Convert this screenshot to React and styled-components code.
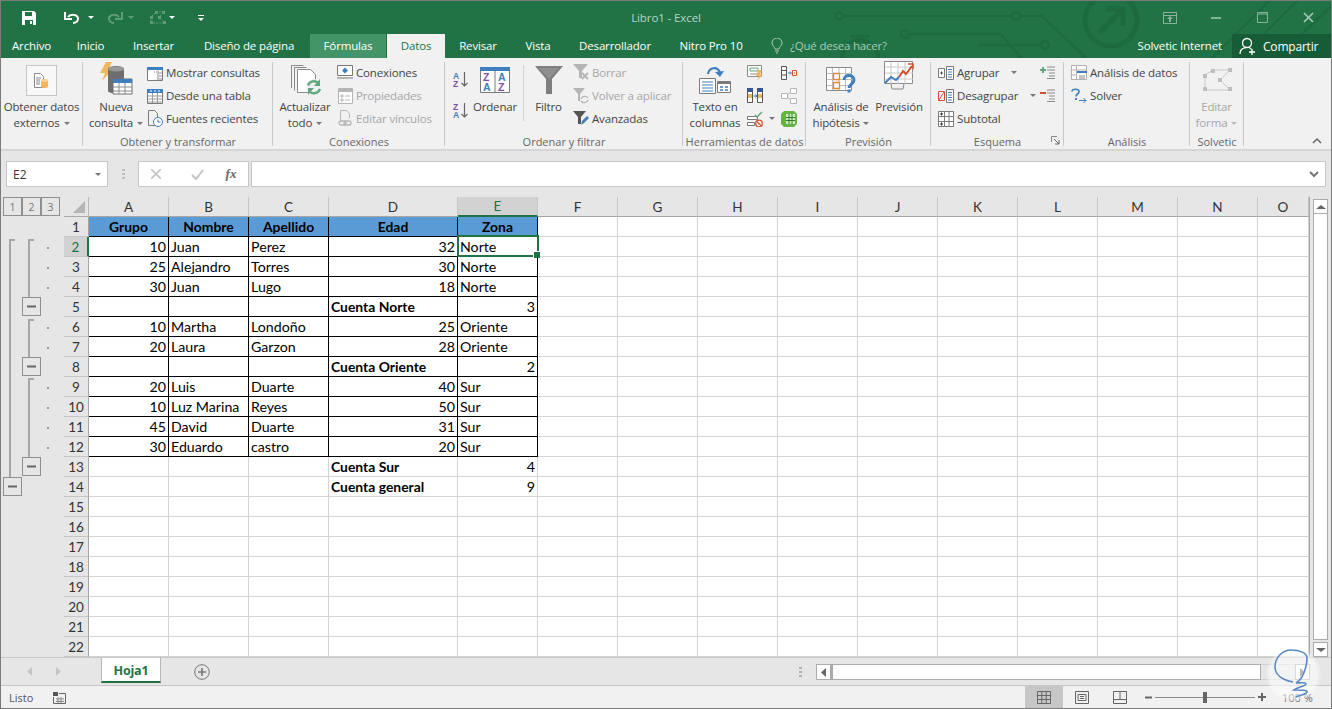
import React from "react";
import styled, { createGlobalStyle } from "styled-components";

const GlobalStyle = createGlobalStyle`
  html, body { margin: 0; padding: 0; background: #e6e6e6; }
  * { box-sizing: border-box; }
`;

const uiFont = `"Open Sans", "Noto Sans", sans-serif`;
const cellFont = `Lato, "Liberation Sans", sans-serif`;

const Window = styled.div`
  position: relative;
  width: 1332px;
  height: 709px;
  border: 1px solid #7b7b7b;
  display: flex;
  flex-direction: column;
  overflow: hidden;
  font-family: ${uiFont};
  background: #e6e6e6;
`;

/* ---------- title bar and tabs ---------- */
const Header = styled.div`
  position: relative;
  background: #217346;
  flex: none;
`;
const Circuit = styled.svg`
  position: absolute;
  left: -1px;
  top: -1px;
`;
const TitleBar = styled.div`
  position: relative;
  height: 33px;
  display: grid;
  grid-template-columns: 1fr auto 1fr;
  align-items: center;
`;
const Qat = styled.div`
  display: flex;
  align-items: center;
  padding-left: 20px;
  height: 100%;
`;
const QatSlot = styled.span`
  display: flex;
  align-items: center;
  margin-left: ${(p) => p.$ml || 0}px;
`;
const WindowTitle = styled.div`
  color: #b7d3c3;
  font-size: 11.5px;
  letter-spacing: -0.1px;
`;
const Controls = styled.div`
  display: flex;
  justify-content: flex-end;
`;
const ControlBtn = styled.div`
  width: 46px;
  height: 33px;
  display: flex;
  align-items: center;
  justify-content: center;
`;
const TabRow = styled.div`
  position: relative;
  height: 24px;
  display: flex;
  align-items: stretch;
`;
const Tab = styled.div`
  width: ${(p) => p.$w}px;
  margin-left: ${(p) => p.$ml || 0}px;
  padding-bottom: 1px;
  display: flex;
  align-items: center;
  justify-content: center;
  font-size: 11.5px;
  letter-spacing: -0.15px;
  color: ${(p) => (p.$active ? "#217346" : "#fff")};
  background: ${(p) => (p.$active ? "#f1f1f1" : p.$hot ? "#439467" : "transparent")};
`;
const HelpBox = styled.div`
  margin-left: 14px;
  padding-bottom: 1px;
  display: flex;
  align-items: center;
  gap: 7px;
  color: #a9cbb7;
  font-size: 11.5px;
  letter-spacing: -0.2px;
`;
const TabRight = styled.div`
  margin-left: auto;
  display: flex;
  align-items: stretch;
`;
const UserName = styled.div`
  display: flex;
  align-items: center;
  padding-bottom: 1px;
  color: #fff;
  font-size: 11.5px;
  letter-spacing: -0.15px;
  margin-right: 10px;
`;
const ShareBtn = styled.div`
  width: 99px;
  background: #185c37;
  display: flex;
  align-items: center;
  gap: 6px;
  padding-left: 7px;
  color: #fff;
  font-size: 12px;
  letter-spacing: -0.2px;
`;

/* ---------- ribbon ---------- */
const Ribbon = styled.div`
  position: relative;
  flex: none;
  height: 93px;
  display: flex;
  background: #f1f1f1;
  border-bottom: 2px solid #d6d6d6;
  color: #444;
  font-size: 11.5px;
  letter-spacing: -0.15px;
`;
const GroupWrap = styled.div`
  position: relative;
  width: ${(p) => p.$w}px;
  height: 91px;
  display: flex;
  flex-direction: column;
  flex: none;
  &::after {
    content: "";
    position: absolute;
    right: 0;
    top: 4px;
    bottom: 3px;
    width: 1px;
    background: #c9c9c9;
  }
`;
const GroupBody = styled.div`
  flex: 1;
  display: flex;
  padding-top: 3px;
  padding-left: ${(p) => p.$pad || 0}px;
`;
const GroupLabel = styled.div`
  height: 16px;
  margin-bottom: -1px;
  text-align: center;
  line-height: 16px;
  color: #666;
  font-size: 11px;
  letter-spacing: 0;
  white-space: nowrap;
`;
const Launcher = styled.svg`
  position: absolute;
  right: 4px;
  bottom: 4px;
`;
const BigBtn = styled.div`
  width: ${(p) => p.$w}px;
  margin-left: ${(p) => p.$ml || 0}px;
  display: flex;
  flex-direction: column;
  align-items: center;
  flex: none;
  color: ${(p) => (p.$off ? "#a6a6a6" : "inherit")};
`;
const BigIcon = styled.div`
  height: 38px;
  display: flex;
  align-items: ${(p) => (p.$top ? "flex-start" : "center")};
  justify-content: center;
`;
const BigText = styled.div`
  line-height: 16px;
  text-align: center;
  white-space: nowrap;
`;
const IconBox = styled.div`
  width: 31px;
  height: 31px;
  margin-top: 1px;
  border: 1px solid #c6c6c6;
  background: #f8f8f8;
  display: flex;
  align-items: center;
  justify-content: center;
`;
const Caret = styled.span`
  display: inline-block;
  width: 0;
  height: 0;
  margin-left: ${(p) => p.$ml ?? 4}px;
  vertical-align: 2px;
  border-left: 3px solid transparent;
  border-right: 3px solid transparent;
  border-top: 3px solid ${(p) => p.$color || "#777"};
`;
const SmallCol = styled.div`
  width: ${(p) => (p.$w ? `${p.$w}px` : "auto")};
  margin-left: ${(p) => p.$ml || 0}px;
  padding-top: ${(p) => p.$top || 0}px;
  display: flex;
  flex-direction: column;
  flex: none;
`;
const SmallRow = styled.div`
  height: ${(p) => p.$h || 23}px;
  display: flex;
  align-items: center;
  gap: ${(p) => p.$gap ?? 3}px;
  white-space: nowrap;
  color: ${(p) => (p.$off ? "#a6a6a6" : "inherit")};
`;
const IconSlot = styled.span`
  width: ${(p) => p.$w || 16}px;
  display: flex;
  justify-content: center;
  flex: none;
`;
const VDivider = styled.div`
  width: 1px;
  height: 56px;
  margin: 4px 0 0 ${(p) => p.$ml || 0}px;
  background: #d2d2d2;
  flex: none;
`;
const Collapse = styled.svg`
  position: absolute;
  right: 9px;
  bottom: 5px;
`;

/* ---------- formula bar ---------- */
const FormulaBar = styled.div`
  flex: none;
  height: 46px;
  padding: 10px 5px 10px 5px;
  display: flex;
  align-items: stretch;
`;
const FieldBox = styled.div`
  height: 26px;
  background: #fff;
  border: 1px solid #c6c6c6;
  display: flex;
  align-items: center;
  flex: ${(p) => (p.$grow ? 1 : "none")};
  width: ${(p) => (p.$w ? `${p.$w}px` : "auto")};
  margin-left: ${(p) => p.$ml || 0}px;
  padding: 0 6px;
  justify-content: ${(p) => p.$justify || "flex-start"};
`;
const NameText = styled.span`
  font-family: ${uiFont};
  font-size: 12px;
  color: #333;
  flex: 1;
`;
const Grip = styled.div`
  width: 3px;
  margin: 8px 0 0 14px;
  height: 11px;
  background: repeating-linear-gradient(#bdbdbd 0 2px, transparent 2px 4px);
`;
const FxText = styled.span`
  font-family: "Liberation Serif", serif;
  font-style: italic;
  font-size: 13px;
  font-weight: 700;
  color: #666;
  width: 16px;
  margin-right: 3px;
  text-align: center;
`;

/* ---------- sheet ---------- */
const Workspace = styled.div`
  flex: none;
  height: 460px;
  display: flex;
`;
const Gutter = styled.div`
  width: 63px;
  flex: none;
`;
const LevelBar = styled.div`
  height: 20px;
  padding-left: 2px;
  display: flex;
`;
const LevelBtn = styled.div`
  width: 19px;
  height: 19px;
  border: 1px solid #8f8f8f;
  display: flex;
  align-items: center;
  justify-content: center;
  font-size: 10.5px;
  color: #777;
`;
const Sheet = styled.div`
  width: 1246px;
  flex: none;
  border-right: 1px solid #a6a6a6;
`;
const GridRow = styled.div`
  display: grid;
  grid-template-columns: 25px 80px 80px 80px 129px 80px 80px 80px 80px 80px 80px 80px 80px 80px 80px 1fr;
  grid-auto-rows: 20px;
  height: 20px;
`;
const Corner = styled.div`
  background: #e6e6e6;
  border-right: 1px solid #b8b8b8;
  border-bottom: 1px solid #a6a6a6;
  position: relative;
  &::after {
    content: "";
    position: absolute;
    right: 3px;
    bottom: 3px;
    border-left: 12px solid transparent;
    border-bottom: 12px solid #b5b5b5;
  }
`;
const ColHead = styled.div`
  display: flex;
  align-items: center;
  justify-content: center;
  font-family: ${cellFont};
  font-size: 13.5px;
  color: ${(p) => (p.$sel ? "#217346" : "#333")};
  background: ${(p) => (p.$sel ? "#d2d2d2" : "#e6e6e6")};
  border-right: 1px solid #c6c6c6;
  border-bottom: ${(p) => (p.$sel ? "2px solid #217346" : "1px solid #a6a6a6")};
`;
const RowHead = styled.div`
  display: flex;
  align-items: center;
  justify-content: center;
  font-family: ${cellFont};
  font-size: 13.5px;
  color: ${(p) => (p.$sel ? "#217346" : "#333")};
  background: ${(p) => (p.$sel ? "#d2d2d2" : "#e6e6e6")};
  border-bottom: 1px solid #c6c6c6;
  border-right: ${(p) => (p.$sel ? "2px solid #217346" : "1px solid #a6a6a6")};
`;
const Cell = styled.div`
  position: relative;
  height: 20px;
  background: ${(p) => (p.$head ? "#5b9bd5" : "#fff")};
  border-right: 1px solid ${(p) => (p.$black ? "#000" : "#d4d4d4")};
  border-bottom: 1px solid ${(p) => (p.$black ? "#000" : "#d4d4d4")};
  font-family: ${cellFont};
  font-size: ${(p) => (p.$bold ? 13.9 : 14.2)}px;
  line-height: 20px;
  color: #000;
  font-weight: ${(p) => (p.$bold ? 700 : 400)};
  text-align: ${(p) => p.$align || "left"};
  padding: 0 2px 0 2px;
  white-space: nowrap;
`;
const Selection = styled.div`
  position: absolute;
  left: -1px;
  top: -2px;
  width: 82px;
  height: 22px;
  border: 2px solid #217346;
  z-index: 2;
  pointer-events: none;
  &::after {
    content: "";
    position: absolute;
    right: -3px;
    bottom: -3px;
    width: 6px;
    height: 6px;
    background: #217346;
    border: 1px solid #fff;
    border-right-width: 0;
    border-bottom-width: 0;
  }
`;
const VScroll = styled.div`
  flex: 1;
  display: flex;
  flex-direction: column;
  padding: 2px 3px 0 3px;
`;
const ScrollBtn = styled.div`
  flex: none;
  width: ${(p) => p.$w || 15}px;
  height: ${(p) => p.$h || 15}px;
  background: #fff;
  border: 1px solid #ababab;
  display: flex;
  align-items: center;
  justify-content: center;
`;
const VThumb = styled.div`
  width: 15px;
  flex: 1;
  background: #fff;
  border: 1px solid #ababab;
  border-top: none;
  margin-bottom: 2px;
`;

/* ---------- sheet tabs ---------- */
const SheetBar = styled.div`
  flex: none;
  height: 29px;
  border-top: 1px solid #c6c6c6;
  border-bottom: 1px solid #c6c6c6;
  display: flex;
  align-items: flex-start;
  position: relative;
`;
const NavArrows = styled.div`
  width: 100px;
  height: 26px;
  display: flex;
  align-items: center;
  gap: 23px;
  padding-left: 26px;
  flex: none;
`;
const SheetTab = styled.div`
  width: 60px;
  height: 25px;
  padding-top: 2px;
  background: #fff;
  border-left: 1px solid #b8b8b8;
  border-right: 1px solid #b8b8b8;
  border-bottom: 2px solid #217346;
  color: #217346;
  font-weight: 700;
  font-size: 12.5px;
  letter-spacing: -0.2px;
  display: flex;
  align-items: center;
  justify-content: center;
`;
const AddSheet = styled.div`
  margin: 5px 0 0 33px;
  height: 18px;
`;
const SplitDots = styled.div`
  margin: 9px 0 0 589px;
  width: 3px;
  height: 11px;
  background: repeating-linear-gradient(#b0b0b0 0 2px, transparent 2px 4px);
`;
const HScroll = styled.div`
  margin: 6px 0 0 14px;
  width: 494px;
  height: 16px;
  display: flex;
  align-items: stretch;
`;
const HThumb = styled.div`
  width: 430px;
  background: #fff;
  border: 1px solid #ababab;
  border-left-width: 2px;
`;
const HTrack = styled.div`
  flex: 1;
  border-top: 1px solid #d0d0d0;
  border-bottom: 1px solid #d0d0d0;
`;

/* ---------- status bar ---------- */
const StatusBar = styled.div`
  flex: none;
  height: 22px;
  background: #f1f1f1;
  display: flex;
  align-items: center;
  color: #555;
  font-size: 11px;
`;
const StatusText = styled.span`
  margin-left: 8px;
  width: 44px;
`;
const StatusRight = styled.div`
  margin-left: auto;
  height: 100%;
  display: flex;
  align-items: center;
`;
const ViewBtn = styled.div`
  width: ${(p) => p.$w || 38}px;
  height: 100%;
  display: flex;
  align-items: center;
  justify-content: center;
  background: ${(p) => (p.$on ? "#c6c6c6" : "transparent")};
`;
const Zoomer = styled.div`
  display: flex;
  align-items: center;
  margin-left: 6px;
`;
const Track = styled.div`
  position: relative;
  width: 100px;
  height: 1px;
  margin: 0 3px;
  background: #8c8c8c;
  &::after {
    content: "";
    position: absolute;
    left: 48px;
    top: -5px;
    width: 4px;
    height: 11px;
    background: #666;
  }
`;
const ZoomValue = styled.span`
  width: 65px;
  padding-left: 16px;
  color: #666;
`;
const Stamp = styled.svg`
  position: absolute;
  left: 1263px;
  top: 643px;
`;

/* ---------- icons ---------- */
const Svg = ({ w, h, children }) => (
  <svg width={w} height={h} viewBox={`0 0 ${w} ${h}`} style={{ display: "block", flex: "none" }}>
    {children}
  </svg>
);

const SaveIcon = () => (
  <Svg w={16} h={16}>
    <path d="M1 1h12l2 2v12H1z" fill="#fff" />
    <path d="M4 2h7v4H4z" fill="#217346" />
    <path d="M4 10h8v5H4z" fill="#217346" />
    <path d="M9 11h2v3H9z" fill="#fff" />
  </Svg>
);
const UndoIcon = ({ c = "#fff" }) => (
  <Svg w={16} h={15}>
    <path d="M4 7c2-3 9-3 10 1 .5 3-2 5-5 5" fill="none" stroke={c} strokeWidth="2" />
    <path d="M1 2v7h7" fill="none" stroke={c} strokeWidth="2" />
  </Svg>
);
const RedoIcon = () => (
  <Svg w={16} h={15}>
    <path d="M12 7c-2-3-9-3-10 1-.5 3 2 5 5 5" fill="none" stroke="#5d9c78" strokeWidth="2" />
    <path d="M15 2v7H8" fill="none" stroke="#5d9c78" strokeWidth="2" />
  </Svg>
);
const ShapeQat = () => (
  <Svg w={18} h={15}>
    <path d="M2 12V7l5-5h8M14 3l-4 4 4 4v2H3" fill="none" stroke="#5d9c78" strokeWidth="1" strokeDasharray="2 1" />
    <path d="M1 6h3v3H1zM6 1h3v3H6zM13 1h3v3h-3zM9 6h3v3H9zM14 11h3v3h-3zM1 11h3v3H1z" fill="#5d9c78" />
  </Svg>
);
const CustomizeQat = () => (
  <Svg w={8} h={8}>
    <path d="M1 1h6v1H1z" fill="#fff" />
    <path d="M1 4h6L4 7z" fill="#fff" />
  </Svg>
);
const RibbonOpt = () => (
  <Svg w={14} h={12}>
    <path d="M.5.5h13v11H.5zM.5 3.5h13" fill="none" stroke="#86b49a" />
    <path d="M7 4l3 3H8v3H6V7H4z" fill="#86b49a" />
  </Svg>
);
const Bulb = () => (
  <Svg w={12} h={16}>
    <path d="M4 11c0-2-3-3-3-6a5 5 0 0 1 10 0c0 3-3 4-3 6z" fill="none" stroke="#a9cbb7" />
    <path d="M4 13h4M5 15h2" stroke="#a9cbb7" />
  </Svg>
);
const PersonPlus = () => (
  <Svg w={18} h={18}>
    <circle cx="8" cy="6" r="4.5" fill="none" stroke="#fff" strokeWidth="1.3" />
    <path d="M1 17c0-4 3-6 6-6.300M10 10.500c1 .3 2 1 2.500 2" fill="none" stroke="#fff" strokeWidth="1.300" />
    <path d="M13 12v6M10 15h6" stroke="#fff" strokeWidth="1.300" />
  </Svg>
);
const GetData = () => (
  <Svg w={18} h={16}>
    <path d="M1.500.5h6l3 3v11h-9z" fill="#fff" stroke="#8a8a8a" />
    <path d="M3 5h5M3 7h4M3 9h4M3 11h4" stroke="#8a8a8a" />
    <path d="M8 7.500c0-2 7-2 7 0v6c0 2-7 2-7 0z" fill="#f2b65c" />
    <ellipse cx="11.500" cy="7.500" rx="3.500" ry="1.300" fill="#f9d79f" />
  </Svg>
);
const NewQuery = () => (
  <Svg w={34} h={36}>
    <path d="M7 0h6L9 8h4L3 19l3-8H1z" fill="#f2b65c" />
    <path d="M9 7c0-4 16-4 16 0v22c0 3-16 3-16 0z" fill="#6e6e6e" />
    <ellipse cx="17" cy="7" rx="8" ry="2.500" fill="#9a9a9a" />
    <path d="M14 17h19v15H14z" fill="#fff" stroke="#6e6e6e" />
    <path d="M14 17h19v4H14z" fill="#3f7fbf" />
    <path d="M14 25h19M14 29h19M20 21v11M26 21v11" stroke="#8c8c8c" />
  </Svg>
);
const ShowQueries = () => (
  <Svg w={16} h={16}>
    <path d="M.5 2.500h15v13H.5z" fill="#fff" stroke="#7a7a7a" />
    <path d="M0 2h16v3H0z" fill="#3f7fbf" />
    <path d="M11 5.500v10M12 8h3M12 11h3M12 14h3" stroke="#8a8a8a" />
    <path d="M7 7h1M9 7h1" stroke="#8a8a8a" />
  </Svg>
);
const FromTable = () => (
  <Svg w={16} h={16}>
    <path d="M.5 1.500h15v14H.5z" fill="#fff" stroke="#7a7a7a" />
    <path d="M0 1h16v4H0z" fill="#3f7fbf" />
    <path d="M3 3h2M7 3h2M11 3h2" stroke="#fff" />
    <path d="M1 8h14M1 11h14M1 14h14M5.500 5v10M10.500 5v10" stroke="#9a9a9a" />
  </Svg>
);
const RecentSources = () => (
  <Svg w={16} h={17}>
    <path d="M8 15.500H1.500V.5h6l3 3V7" fill="none" stroke="#7a7a7a" />
    <circle cx="11" cy="12" r="4.500" fill="#fff" stroke="#3f7fbf" />
    <path d="M11 9.500V12h2.500" fill="none" stroke="#3f7fbf" />
  </Svg>
);
const Refresh = () => (
  <Svg w={34} h={30}>
    <path d="M3.500 23V.5h12M6.500 25.500V2.500h12" stroke="#8a8a8a" fill="#f1f1f1" />
    <path d="M9.500 4.500h13l5 5v18h-18z" fill="#fff" stroke="#8a8a8a" />
    <circle cx="26" cy="22" r="8" fill="#f1f1f1" />
    <path d="M20 20.500a6.500 6.500 0 0 1 11-2M32 24a6.500 6.500 0 0 1-11 2" fill="none" stroke="#5fa87e" strokeWidth="2.400" />
    <path d="M32 14v7h-6zM20 30v-7h6z" fill="#5fa87e" />
  </Svg>
);
const Connections = () => (
  <Svg w={16} h={15}>
    <path d="M.5.5h15v10H.5z" fill="#fff" stroke="#7a7a7a" />
    <path d="M8 2.500l3 3-3 3-3-3z" fill="#3f7fbf" />
    <path d="M0 13h16" stroke="#7a7a7a" />
  </Svg>
);
const Properties = () => (
  <Svg w={15} h={16}>
    <path d="M.5.5h14v15H.5z" fill="#fff" stroke="#b5b5b5" />
    <path d="M0 1h15v3H0z" fill="#b5b5b5" />
    <path d="M3 7h2v2H3zM3 11h2v2H3zM7 8h5M7 12h5" stroke="#b5b5b5" fill="none" />
  </Svg>
);
const EditLinks = () => (
  <Svg w={15} h={17}>
    <path d="M2.500 11V.5h6l3 3V8" fill="none" stroke="#b5b5b5" />
    <rect x="1" y="11" width="7" height="4" rx="2" fill="none" stroke="#b5b5b5" strokeWidth="1.300" />
    <rect x="6" y="11" width="7" height="4" rx="2" fill="none" stroke="#b5b5b5" strokeWidth="1.300" />
  </Svg>
);
const letter = { fontFamily: "Liberation Sans, sans-serif", fontWeight: 700 };
const SortAZ = ({ flip }) => (
  <Svg w={16} h={17}>
    <text x="0" y="8" fontSize="8.500" fill={flip ? "#7b4fa6" : "#3f7fbf"} style={letter}>{flip ? "Z" : "A"}</text>
    <text x="0" y="16" fontSize="8.500" fill={flip ? "#3f7fbf" : "#7b4fa6"} style={letter}>{flip ? "A" : "Z"}</text>
    <path d="M11.500 1v14M8.500 12l3 3 3-3" fill="none" stroke="#666" strokeWidth="1.200" />
  </Svg>
);
const SortBig = () => (
  <Svg w={30} h={26}>
    <path d="M.5.5h29v25H.5z" fill="#fff" stroke="#7a7a7a" />
    <path d="M0 0h30v4H0z" fill="#3f7fbf" />
    <path d="M15 4v22" stroke="#7a7a7a" />
    <text x="3" y="14" fontSize="10.500" fill="#7b4fa6" style={letter}>Z</text>
    <text x="3" y="24" fontSize="10.500" fill="#3f7fbf" style={letter}>A</text>
    <text x="18" y="14" fontSize="10.500" fill="#3f7fbf" style={letter}>A</text>
    <text x="18" y="24" fontSize="10.500" fill="#7b4fa6" style={letter}>Z</text>
  </Svg>
);
const Funnel = () => (
  <Svg w={28} h={28}>
    <path d="M0 0h28L17 13v15h-6V13z" fill="#7f7f7f" />
    <path d="M4 2h20l-9 10h-2z" fill="#8f8f8f" />
  </Svg>
);
const ClearFilter = () => (
  <Svg w={16} h={17}>
    <path d="M0 0h15L9 7v7H6V7z" fill="#b5b5b5" />
    <path d="M9 9l6 6M15 9l-6 6" stroke="#b5b5b5" strokeWidth="1.800" />
  </Svg>
);
const ReapplyFilter = () => (
  <Svg w={16} h={16}>
    <path d="M0 0h12L7 6v7H5V6z" fill="#b5b5b5" />
    <path d="M8 11a4 4 0 0 1 7-1M15 12a4 4 0 0 1-7 1" fill="none" stroke="#b5b5b5" strokeWidth="1.300" />
  </Svg>
);
const AdvancedFilter = () => (
  <Svg w={16} h={16}>
    <path d="M0 0h13L8 6v7H5V6z" fill="#555" />
    <path d="M8 14l1-4 5-5 2 2-5 5z" fill="#3f7fbf" />
  </Svg>
);
const TextToCols = () => (
  <Svg w={32} h={30}>
    <path d="M9 9c1-7 10-8 12-1" fill="none" stroke="#3f7fbf" strokeWidth="2.200" />
    <path d="M16 7l5 5 4-6z" fill="#3f7fbf" />
    <path d="M.5 13.500h16v15H.5z" fill="#fff" stroke="#7a7a7a" />
    <path d="M3 17h11M3 20h11M3 23h11M3 26h11" stroke="#3f7fbf" />
    <path d="M18.500 16.500h13v11h-13z" fill="#fff" stroke="#7a7a7a" />
    <path d="M19 17h12v2H19z" fill="#7a7a7a" />
    <path d="M21 22h3M26 22h3M21 25h3M26 25h3" stroke="#3f7fbf" strokeWidth="1.400" />
  </Svg>
);
const FlashFill = () => (
  <Svg w={16} h={16}>
    <path d="M.5.5h14v11H.5z" fill="#fff" stroke="#8a8a8a" />
    <path d="M3 3h8v3H3z" fill="#fff" stroke="#5fa87e" />
    <path d="M3 9h7" stroke="#8a8a8a" />
    <path d="M11 5h4l-2 4h3l-6 7 2-5H9z" fill="#f2b65c" />
  </Svg>
);
const RemoveDup = () => (
  <Svg w={16} h={15}>
    <path d="M.5.500h5v14h-5zM10.500.5h5v14h-5z" fill="#fff" stroke="#555" />
    <path d="M0 0h6v4H0zM10 0h6v4h-6z" fill="#37578f" />
    <path d="M1 6h4v4H1zM11 6h4v4h-4z" fill="#e8b56a" />
    <path d="M6.500 8h3M8.500 6.500L10 8l-1.500 1.500" fill="none" stroke="#3f7fbf" />
  </Svg>
);
const DataValidation = () => (
  <Svg w={16} h={16}>
    <path d="M.5 5.500h10v3H.5zM.5 11.500h7v3h-7z" fill="#fff" stroke="#7a7a7a" />
    <path d="M8 4l2 2 5-5" fill="none" stroke="#5fa87e" strokeWidth="1.500" />
    <circle cx="12" cy="12.500" r="3.300" fill="#fff" stroke="#d3502f" strokeWidth="1.300" />
    <path d="M10 10.500l4 4" stroke="#d3502f" strokeWidth="1.300" />
  </Svg>
);
const Consolidate = () => (
  <Svg w={16} h={14}>
    <path d="M.5.5h5v13h-5z" fill="#fff" stroke="#555" />
    <path d="M1 4.500h4M1 9h4" stroke="#555" />
    <path d="M7 7h3M9 5.500L10.500 7 9 8.500" fill="none" stroke="#3f7fbf" />
    <path d="M11.500 4.500h4v5h-4z" fill="#fff" stroke="#d3502f" />
    <path d="M13 6.500h1v1h-1z" fill="#d3502f" />
  </Svg>
);
const Relations = () => (
  <Svg w={16} h={16}>
    <path d="M.5 5.500h6v5h-6zM9.500.5h6v5h-6zM9.500 10.500h6v5h-6z" fill="#fff" stroke="#b5b5b5" />
    <path d="M6.500 7l3-3M6.500 9l3 3" stroke="#b5b5b5" />
  </Svg>
);
const DataModel = () => (
  <Svg w={16} h={16}>
    <path d="M3 0h10l3 3v10l-3 3H3l-3-3V3z" fill="#63b345" />
    <path d="M5 3h9v10H5z" fill="#d5ecc9" />
    <path d="M8 3v10M11 3v10M5 6.500h9M5 9.500h9" stroke="#2f7a25" />
  </Svg>
);
const WhatIf = () => (
  <Svg w={30} h={26}>
    <path d="M.5.5h25v23H.5z" fill="#fff" stroke="#8a8a8a" />
    <path d="M6.500 1v22M13 1v22M19.500 1v22M1 6.500h25M1 12.500h25M1 18.500h25" stroke="#bdbdbd" />
    <path d="M7.500 6.500h6v6h-6zM7.500 15.500h6v6h-6z" fill="#fff" stroke="#e08a2e" strokeWidth="1.300" />
    <path d="M18 13c0-6 10-6 10 0 0 4-5 4-5 8" fill="none" stroke="#3f7fbf" strokeWidth="3" />
    <path d="M21.500 22.500h3v3h-3z" fill="#3f7fbf" />
  </Svg>
);
const Forecast = () => (
  <Svg w={30} h={32}>
    <path d="M.5.5h28v22H.5z" fill="#fff" stroke="#8a8a8a" />
    <path d="M7 1v22M14 1v22M21 1v22M1 6h28M1 12h28M1 18h28" stroke="#c8c8c8" />
    <path d="M1 22l6-6 5 3 3-3" fill="none" stroke="#3f7fbf" strokeWidth="2" />
    <path d="M15 16l4-6 3 3 6-8" fill="none" stroke="#d3502f" strokeWidth="2" />
    <path d="M24 3h5v5" fill="none" stroke="#d3502f" strokeWidth="1.500" />
    <path d="M7 23l1 5h11l1-5" fill="none" stroke="#8a8a8a" />
  </Svg>
);
const GroupIco = ({ minus }) => (
  <Svg w={16} h={14}>
    <path d="M.5 2.500h6v9h-6z" fill="#fff" stroke={minus ? "#d3502f" : "#7a7a7a"} />
    {minus ? <path d="M1 11l5-8" stroke="#d3502f" /> : <path d="M2 7h3M3.500 5.500v3" stroke="#555" />}
    <path d="M8.500.5h7v13h-7z" fill="#fff" stroke="#7a7a7a" />
    <path d="M10 3.500h4M10 6h4M10 8.500h4M10 11h4" stroke="#3f7fbf" />
  </Svg>
);
const SubtotalIco = () => (
  <Svg w={16} h={16}>
    <path d="M.5.500h15v15H.5z" fill="#fff" stroke="#7a7a7a" />
    <path d="M1 5.500h14M1 10.500h14M6.500 1v14M11 1v14" stroke="#7a7a7a" />
    <path d="M2 3h3M3.500 1.500v3M2 13h3M3.500 11.500v3" stroke="#333" />
  </Svg>
);
const ShowDetail = ({ minus }) => (
  <Svg w={15} h={13}>
    {minus ? <path d="M0 3h6v2H0z" fill="#d3502f" /> : <path d="M2 1h2v2h2v2H4v2H2V5H0V3h2z" fill="#5fa87e" />}
    <path d="M7 1h8M7 4h8M9 7h6M9 10h6M7 12.500h8" stroke="#8a8a8a" />
  </Svg>
);
const AnalysisIco = () => (
  <Svg w={16} h={15}>
    <path d="M.5.500h15v14H.5z" fill="#fff" stroke="#b0b0b0" />
    <path d="M5.500 1v14M1 5h15M1 10h5" stroke="#b0b0b0" />
    <path d="M6 6h10v2H6z" fill="#3f7fbf" />
    <path d="M8 11h6M8 13h6" stroke="#8a8a8a" />
  </Svg>
);
const SolverIco = () => (
  <Svg w={16} h={15}>
    <path d="M1 3.500c0-3 7-3 7 0 0 2.500-3 2.500-3 5" fill="none" stroke="#3f7fbf" strokeWidth="1.700" />
    <path d="M4 10h2v2H4z" fill="#3f7fbf" />
    <path d="M8 12.500h7M12.500 10l2.500 2.500-2.500 2.500" fill="none" stroke="#3f7fbf" />
  </Svg>
);
const EditShape = () => (
  <Svg w={30} h={24}>
    <path d="M3 7v15h25L18 12 28 2H11z" fill="none" stroke="#c9c9c9" />
    <path d="M1 6h4v4H1zM9 1h4v4H9zM26 0h4v4h-4zM16 10h4v4h-4zM26 19h4v4h-4zM1 19h4v4H1z" fill="#bdbdbd" />
  </Svg>
);

/* ---------- data ---------- */
const columns = ["A", "B", "C", "D", "E", "F", "G", "H", "I", "J", "K", "L", "M", "N", "O"];
const cols = columns.slice(5);

const tableRows = [
  [10, "Juan", "Perez", 32, "Norte"],
  [25, "Alejandro", "Torres", 30, "Norte"],
  [30, "Juan", "Lugo", 18, "Norte"],
  ["", "", "", "Cuenta Norte", 3],
  [10, "Martha", "Londoño", 25, "Oriente"],
  [20, "Laura", "Garzon", 28, "Oriente"],
  ["", "", "", "Cuenta Oriente", 2],
  [20, "Luis", "Duarte", 40, "Sur"],
  [10, "Luz Marina", "Reyes", 50, "Sur"],
  [45, "David", "Duarte", 31, "Sur"],
  [30, "Eduardo", "castro", 20, "Sur"],
  ["", "", "", "Cuenta Sur", 4],
  ["", "", "", "Cuenta general", 9],
];
const headings = ["Grupo", "Nombre", "Apellido", "Edad", "Zona"];

const Group = ({ w, label, pad, children, launcher }) => (
  <GroupWrap $w={w}>
    <GroupBody $pad={pad}>{children}</GroupBody>
    <GroupLabel>{label}</GroupLabel>
    {launcher && (
      <Launcher width="9" height="9" viewBox="0 0 9 9">
        <path d="M.5 6V.5H6" fill="none" stroke="#888" />
        <path d="M3 3l5 5M8 4v4H4" fill="none" stroke="#666" />
      </Launcher>
    )}
  </GroupWrap>
);

const Small = ({ icon, children, off, w }) => (
  <SmallRow $off={off}>
    <IconSlot $w={w}>{icon}</IconSlot>
    {children}
  </SmallRow>
);

const OutlineGlyph = ({ x, y }) => (
  <g>
    <rect x={x + 0.5} y={y + 0.5} width="18" height="18" fill="#e6e6e6" stroke="#8f8f8f" />
    <path d={`M${x + 5} ${y + 9.5}h9`} stroke="#666" strokeWidth="2" />
  </g>
);

const Outline = () => {
  const dots = [247, 267, 287, 327, 347, 387, 407, 427, 447];
  return (
    <svg width="63" height="440" viewBox="1 217 63 440" style={{ display: "block" }}>
      <path d="M15 240H10V477" fill="none" stroke="#a6a6a6" strokeWidth="2" />
      <path d="M34 240H29V297" fill="none" stroke="#a6a6a6" strokeWidth="2" />
      <path d="M34 320H29V357" fill="none" stroke="#a6a6a6" strokeWidth="2" />
      <path d="M34 379H29V457" fill="none" stroke="#a6a6a6" strokeWidth="2" />
      {dots.map((y) => (
        <rect key={y} x="47" y={y} width="2" height="2" fill="#999" />
      ))}
      <OutlineGlyph x={22} y={297} />
      <OutlineGlyph x={22} y={357} />
      <OutlineGlyph x={22} y={457} />
      <OutlineGlyph x={3} y={477} />
    </svg>
  );
};

export default function App() {
  const emptyRows = [];
  for (let n = 15; n <= 22; n++) emptyRows.push(n);

  return (
    <Window>
      <GlobalStyle />
      <Header>
        <Circuit width="1332" height="58" viewBox="0 0 1332 58">
          <g fill="none" stroke="#1e6a40" strokeWidth="2.500">
            <circle cx="839" cy="16" r="3.500" />
            <path d="M843 16H1012" />
            <circle cx="1016" cy="16" r="4" />
            <path d="M1020 16h22l44 42" />
            <circle cx="905" cy="34" r="4" />
            <path d="M909 34h92l20 24" />
            <circle cx="1045" cy="45" r="4" />
            <path d="M978 45h63" />
            <path d="M842 58a18 18 0 0 1 36 0" strokeWidth="4" />
            <path d="M850 36h20" />
            <circle cx="1111" cy="20" r="26" strokeWidth="5" />
            <path d="M1099 33l24-24M1106 9h17v17" strokeWidth="5" />
            <path d="M1212 58L1270 0M1240 58L1298 0M1300 36L1332 5" />
          </g>
        </Circuit>
        <TitleBar>
          <Qat>
            <QatSlot><SaveIcon /></QatSlot>
            <QatSlot $ml={27}><UndoIcon /></QatSlot>
            <QatSlot $ml={8}><Caret $color="#fff" $ml={0} /></QatSlot>
            <QatSlot $ml={13}><RedoIcon /></QatSlot>
            <QatSlot $ml={5}><Caret $color="#5d9c78" $ml={0} /></QatSlot>
            <QatSlot $ml={15}><ShapeQat /></QatSlot>
            <QatSlot $ml={2}><Caret $color="#fff" $ml={0} /></QatSlot>
            <QatSlot $ml={22}><CustomizeQat /></QatSlot>
          </Qat>
          <WindowTitle>Libro1 - Excel</WindowTitle>
          <Controls>
            <ControlBtn><RibbonOpt /></ControlBtn>
            <ControlBtn>
              <svg width="10" height="2"><path d="M0 1h10" stroke="#86b49a" strokeWidth="2" /></svg>
            </ControlBtn>
            <ControlBtn>
              <svg width="11" height="11"><path d="M.5.500h10v10H.5zM1 2h9" fill="none" stroke="#86b49a" /></svg>
            </ControlBtn>
            <ControlBtn>
              <svg width="11" height="11"><path d="M1 1l9 9M10 1l-9 9" stroke="#a9cbb7" strokeWidth="1.600" /></svg>
            </ControlBtn>
          </Controls>
        </TitleBar>
        <TabRow>
          <Tab $w={61}>Archivo</Tab>
          <Tab $w={57}>Inicio</Tab>
          <Tab $w={69}>Insertar</Tab>
          <Tab $w={122}>Diseño de página</Tab>
          <Tab $w={76} $hot>Fórmulas</Tab>
          <Tab $w={58} $ml={1} $active>Datos</Tab>
          <Tab $w={66}>Revisar</Tab>
          <Tab $w={54}>Vista</Tab>
          <Tab $w={100}>Desarrollador</Tab>
          <Tab $w={92}>Nitro Pro 10</Tab>
          <HelpBox><Bulb />¿Qué desea hacer?</HelpBox>
          <TabRight>
            <UserName>Solvetic Internet</UserName>
            <ShareBtn><PersonPlus />Compartir</ShareBtn>
          </TabRight>
        </TabRow>
      </Header>

      <Ribbon>
        <Group w={82} label="">
          <BigBtn $w={79} $ml={1}>
            <BigIcon><IconBox><GetData /></IconBox></BigIcon>
            <BigText>Obtener datos<br />externos<Caret /></BigText>
          </BigBtn>
        </Group>
        <Group w={190} label="Obtener y transformar" pad={8}>
          <BigBtn $w={50}>
            <BigIcon><NewQuery /></BigIcon>
            <BigText>Nueva<br />consulta<Caret /></BigText>
          </BigBtn>
          <SmallCol $ml={6}>
            <Small icon={<ShowQueries />}>Mostrar consultas</Small>
            <Small icon={<FromTable />}>Desde una tabla</Small>
            <Small icon={<RecentSources />}>Fuentes recientes</Small>
          </SmallCol>
        </Group>
        <Group w={172} label="Conexiones" pad={3}>
          <BigBtn $w={58}>
            <BigIcon><Refresh /></BigIcon>
            <BigText>Actualizar<br />todo<Caret /></BigText>
          </BigBtn>
          <SmallCol $ml={3}>
            <Small icon={<Connections />}>Conexiones</Small>
            <Small off icon={<Properties />}>Propiedades</Small>
            <Small off icon={<EditLinks />}>Editar vínculos</Small>
          </SmallCol>
        </Group>
        <Group w={238} label="Ordenar y filtrar" pad={8}>
          <SmallCol $w={18} $top={7}>
            <SmallRow><SortAZ /></SmallRow>
            <SmallRow $h={8} />
            <SmallRow><SortAZ flip /></SmallRow>
          </SmallCol>
          <BigBtn $w={48}>
            <BigIcon><SortBig /></BigIcon>
            <BigText>Ordenar</BigText>
          </BigBtn>
          <VDivider $ml={4} />
          <BigBtn $w={49}>
            <BigIcon><Funnel /></BigIcon>
            <BigText>Filtro</BigText>
          </BigBtn>
          <SmallCol>
            <Small off icon={<ClearFilter />}>Borrar</Small>
            <Small off icon={<ReapplyFilter />}>Volver a aplicar</Small>
            <Small icon={<AdvancedFilter />}>Avanzadas</Small>
          </SmallCol>
        </Group>
        <Group w={123} label="Herramientas de datos" pad={4}>
          <BigBtn $w={56}>
            <BigIcon><TextToCols /></BigIcon>
            <BigText>Texto en<br />columnas</BigText>
          </BigBtn>
          <SmallCol $w={34} $ml={4}>
            <SmallRow><FlashFill /></SmallRow>
            <SmallRow><RemoveDup /></SmallRow>
            <SmallRow $gap={6}><DataValidation /><Caret $ml={0} /></SmallRow>
          </SmallCol>
          <SmallCol>
            <SmallRow><Consolidate /></SmallRow>
            <SmallRow><Relations /></SmallRow>
            <SmallRow><DataModel /></SmallRow>
          </SmallCol>
        </Group>
        <Group w={125} label="Previsión" pad={5}>
          <BigBtn $w={60}>
            <BigIcon><WhatIf /></BigIcon>
            <BigText>Análisis de<br />hipótesis<Caret /></BigText>
          </BigBtn>
          <BigBtn $w={54} $ml={1}>
            <BigIcon $top><Forecast /></BigIcon>
            <BigText>Previsión</BigText>
          </BigBtn>
        </Group>
        <Group w={133} label="Esquema" pad={7} launcher>
          <SmallCol $w={102}>
            <Small icon={<GroupIco />}>Agrupar<Caret $ml={9} /></Small>
            <Small icon={<GroupIco minus />}>Desagrupar<Caret $ml={9} /></Small>
            <Small icon={<SubtotalIco />}>Subtotal</Small>
          </SmallCol>
          <SmallCol>
            <SmallRow><ShowDetail /></SmallRow>
            <SmallRow><ShowDetail minus /></SmallRow>
          </SmallCol>
        </Group>
        <Group w={126} label="Análisis" pad={7}>
          <SmallCol>
            <Small icon={<AnalysisIco />}>Análisis de datos</Small>
            <Small icon={<SolverIco />}>Solver</Small>
          </SmallCol>
        </Group>
        <Group w={54} label="Solvetic">
          <BigBtn $w={53} $off>
            <BigIcon><EditShape /></BigIcon>
            <BigText>Editar<br />forma<Caret $color="#bbb" /></BigText>
          </BigBtn>
        </Group>
        <Collapse width="10" height="7" viewBox="0 0 10 7">
          <path d="M1 6l4-4 4 4" fill="none" stroke="#666" strokeWidth="1.500" />
        </Collapse>
      </Ribbon>

      <FormulaBar>
        <FieldBox $w={102}>
          <NameText>E2</NameText>
          <Caret $ml={0} $color="#777" />
        </FieldBox>
        <Grip />
        <FieldBox $w={111} $ml={13} $justify="space-between">
          <svg width="10" height="10" style={{ marginLeft: 6 }}><path d="M0 0l10 10M10 0L0 10" stroke="#c4c4c4" strokeWidth="1.600" /></svg>
          <svg width="13" height="11" style={{ marginLeft: 11 }}><path d="M1 6l4 4 7-9" fill="none" stroke="#c4c4c4" strokeWidth="2" /></svg>
          <FxText>fx</FxText>
        </FieldBox>
        <FieldBox $grow $ml={2} $justify="flex-end">
          <svg width="10" height="7"><path d="M1 1l4 4 4-4" fill="none" stroke="#777" strokeWidth="2" /></svg>
        </FieldBox>
      </FormulaBar>

      <Workspace>
        <Gutter>
          <LevelBar>
            <LevelBtn>1</LevelBtn>
            <LevelBtn>2</LevelBtn>
            <LevelBtn>3</LevelBtn>
          </LevelBar>
          <Outline />
        </Gutter>
        <Sheet>
          <GridRow>
            <Corner />
            {columns.map((c) => (
              <ColHead key={c} $sel={c === "E"}>{c}</ColHead>
            ))}
          </GridRow>
          <GridRow>
            <RowHead>1</RowHead>
            {headings.map((h) => (
              <Cell key={h} $head $black $bold $align="center">{h}</Cell>
            ))}
            {cols.map((c) => <Cell key={c} />)}
          </GridRow>
          {tableRows.map((row, i) => {
            const n = i + 2;
            const black = n <= 12;
            return (
              <GridRow key={n}>
                <RowHead $sel={n === 2}>{n}</RowHead>
                {row.map((v, j) => {
                  const isNum = typeof v === "number";
                  const bold = j === 3 && typeof v === "string";
                  return (
                    <Cell key={j} $black={black} $bold={bold} $align={isNum ? "right" : "left"}>
                      {v}
                      {n === 2 && j === 4 && <Selection />}
                    </Cell>
                  );
                })}
                {cols.map((c) => <Cell key={c} />)}
              </GridRow>
            );
          })}
          {emptyRows.map((n) => (
            <GridRow key={n}>
              <RowHead>{n}</RowHead>
              {columns.map((c) => <Cell key={c} />)}
            </GridRow>
          ))}
        </Sheet>
        <VScroll>
          <ScrollBtn>
            <Caret $ml={0} style={{ borderTop: "none", borderBottom: "4px solid #666", borderLeftWidth: 5, borderRightWidth: 5 }} />
          </ScrollBtn>
          <VThumb />
          <ScrollBtn>
            <Caret $ml={0} style={{ borderTopWidth: 4, borderLeftWidth: 5, borderRightWidth: 5, borderTopColor: "#666" }} />
          </ScrollBtn>
        </VScroll>
      </Workspace>

      <SheetBar>
        <NavArrows>
          <svg width="6" height="9"><path d="M5 0v9L0 4.500z" fill="#c4c4c4" /></svg>
          <svg width="6" height="9"><path d="M0 0v9l5-4.500z" fill="#c4c4c4" /></svg>
        </NavArrows>
        <SheetTab>Hoja1</SheetTab>
        <AddSheet>
          <svg width="16" height="16">
            <circle cx="8" cy="8" r="7.300" fill="none" stroke="#777" />
            <path d="M8 4v8M4 8h8" stroke="#777" strokeWidth="1.600" />
          </svg>
        </AddSheet>
        <SplitDots />
        <HScroll>
          <ScrollBtn $w={15} $h={16}>
            <svg width="6" height="9"><path d="M5 0v9L0 4.500z" fill="#666" /></svg>
          </ScrollBtn>
          <HThumb />
          <HTrack />
          <ScrollBtn $w={15} $h={16}>
            <svg width="6" height="9"><path d="M0 0v9l5-4.500z" fill="#666" /></svg>
          </ScrollBtn>
        </HScroll>
      </SheetBar>

      <StatusBar>
        <StatusText>Listo</StatusText>
        <svg width="13" height="13" viewBox="0 0 13 13">
          <path d="M0 1h5v4H0z" fill="#555" />
          <path d="M6 2.500h6.500v10H.5V6" fill="none" stroke="#666" />
          <path d="M3 8h8M3 10.500h8M5 6v6M8 6v6" stroke="#888" />
        </svg>
        <StatusRight>
          <ViewBtn $on>
            <svg width="14" height="13"><path d="M.5.500h13v12H.5zM.5 4.500h13M.5 8.500h13M4.800 0v13M9.200 0v13" fill="none" stroke="#666" /></svg>
          </ViewBtn>
          <ViewBtn>
            <svg width="14" height="13"><path d="M.5.500h13v12H.5z" fill="none" stroke="#666" /><path d="M3 3.500h8v6H3zM5 5.500h4M5 7.500h4" fill="none" stroke="#666" /></svg>
          </ViewBtn>
          <ViewBtn>
            <svg width="14" height="13"><path d="M.5.500h13v12H.5zM.5 8.500h13M7 .5v8" fill="none" stroke="#666" /></svg>
          </ViewBtn>
          <Zoomer>
            <svg width="7" height="7"><path d="M0 3.500h7" stroke="#666" strokeWidth="2" /></svg>
            <Track />
            <svg width="8" height="8"><path d="M0 4h8M4 0v8" stroke="#666" strokeWidth="2" /></svg>
          </Zoomer>
          <ZoomValue>100 %</ZoomValue>
        </StatusRight>
      </StatusBar>

      <Stamp width="60" height="62" viewBox="1264 644 60 62">
        <defs>
          <radialGradient id="stampGlow">
            <stop offset="0.85" stopColor="#fff" stopOpacity="0.55" />
            <stop offset="1" stopColor="#fff" stopOpacity="0" />
          </radialGradient>
        </defs>
        <circle cx="1293.500" cy="674.500" r="28" fill="url(#stampGlow)" />
        <path
          d="M1293 682c-10-2-18-7-18-15 0-10 8-17 16-17 9 0 16 3 16 8 0 6-3 15-5 19-2 3-4 5-6 6 4 0 10-1 10 1 0 2-8 3-12 6 5 0 14 0 13 2-1 3-8 3-11 5"
          fill="none"
          stroke="#5a8ac6"
          strokeWidth="1.600"
        />
      </Stamp>
    </Window>
  );
}
